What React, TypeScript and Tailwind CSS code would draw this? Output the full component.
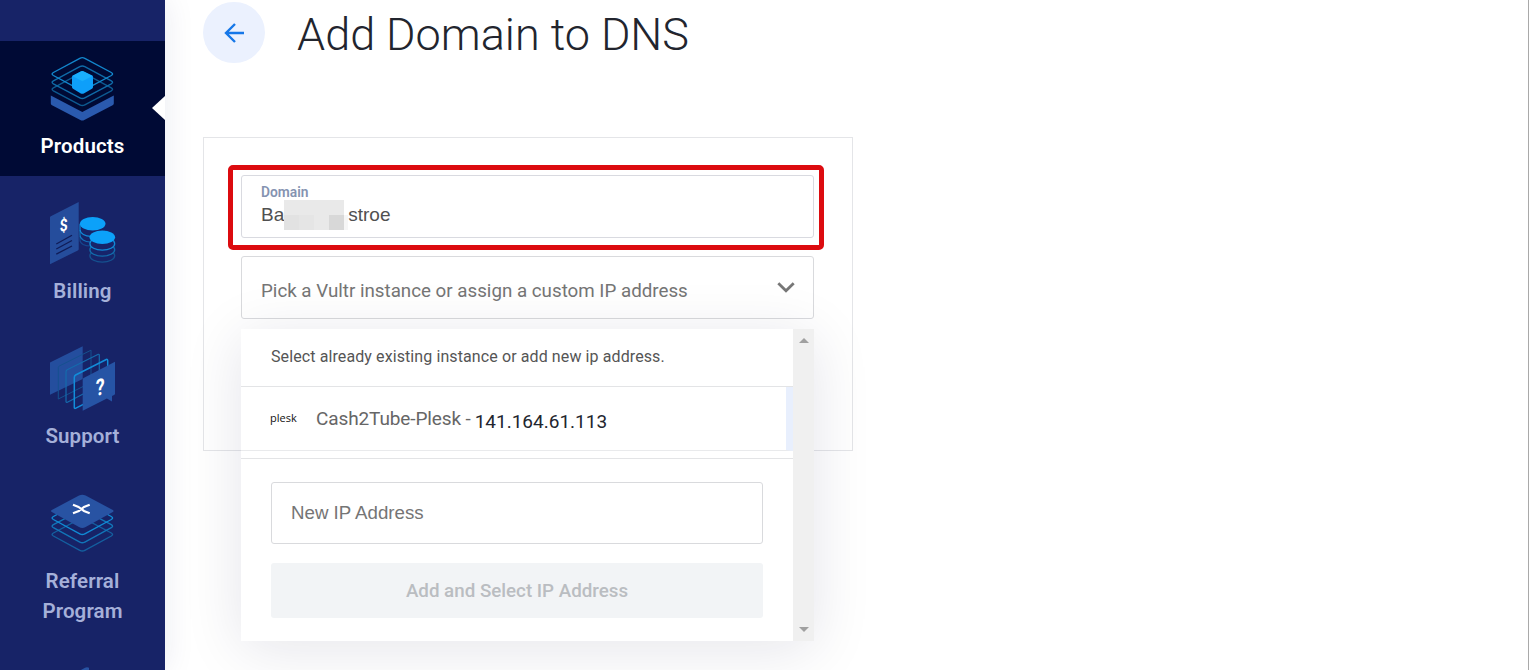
import { ReactNode } from 'react';

const roboto = "font-['Roboto',sans-serif]";

function ProductsIcon() {
  return (
    <svg width="66" height="66" viewBox="0 0 66 66" fill="none">
      <path d="M0.8 39.5 L32.3 56 L63.8 39.5 V47.5 Q63.8 48.5 62.6 49.2 L34.3 63.9 Q32.3 65 30.3 63.9 L2 49.2 Q0.8 48.5 0.8 47.5Z" fill="#2a5aae" />
      <g strokeWidth="1.4">
        <path d="M3.4 31.8 L29.8 17.6 Q32.3 16.3 34.8 17.6 L61.3 31.8 Q63.8 33.3 61.3 34.8 L34.8 48.9 Q32.3 50.2 29.8 48.9 L3.4 34.8 Q0.8 33.3 3.4 31.8Z" stroke="#0d5a90" />
        <path d="M3.4 24.8 L29.8 10.6 Q32.3 9.3 34.8 10.6 L61.3 24.8 Q63.8 26.3 61.3 27.8 L34.8 41.9 Q32.3 43.2 29.8 41.9 L3.4 27.8 Q0.8 26.3 3.4 24.8Z" stroke="#0f6ba8" />
        <path d="M3.4 16.5 L29.8 2.3 Q32.3 1 34.8 2.3 L61.3 16.5 Q63.8 18 61.3 19.5 L34.8 33.6 Q32.3 34.9 29.8 33.6 L3.4 19.5 Q0.8 18 3.4 16.5Z" stroke="#1287cd" />
      </g>
      <path d="M30.8 15.4 Q32.3 14.6 33.8 15.4 L42.2 19.6 Q43 20 43 21 V31 Q43 32.2 42 32.8 L33.8 37.4 Q32.3 38.2 30.8 37.4 L23 32.8 Q22 32.2 22 31 V21 Q22 20 22.8 19.6Z" fill="#0e9ffa" />
      <path d="M30.8 15.4 Q32.3 14.6 33.8 15.4 L42.6 20 L32.3 25.2 L22.4 20Z" fill="#1aaefc" />
    </svg>
  );
}

function BillingIcon() {
  return (
    <svg width="66" height="66" viewBox="0 0 66 66" fill="none">
      <path d="M0 16.5 Q0 15.6 0.8 15.2 L28.7 1 V48 Q28.7 49 27.8 49.5 L0 63.2Z" fill="#254d9c" />
      <path d="M6.3 43 L22 34.3 M6.3 48 L22 39.5 M6.3 53.2 L22 45" stroke="#101c57" strokeWidth="1.3" />
      <text x="0" y="0" transform="translate(9.8 31) skewY(-14)" fontFamily="Roboto" fontWeight="700" fontSize="17" textLength="8" lengthAdjust="spacingAndGlyphs" fill="#fff">$</text>
      <g stroke="#1189d6" strokeWidth="1.2">
        <path d="M30 22.7 V28.5 C30 37 51 38 55 30" />
        <path d="M30 29 V34 C30 38 35 41 40 41" opacity="0.75" />
        <path d="M30 35 V39 C30 43 35 45 40 45" opacity="0.35" />
      </g>
      <ellipse cx="42.7" cy="22.7" rx="12.8" ry="6.8" fill="#0ca1f9" />
      <g fill="#17246a" stroke="#1189d6" strokeWidth="1.3">
        <ellipse cx="52.3" cy="54.7" rx="12.4" ry="6.5" stroke="#15518f" />
        <ellipse cx="52.3" cy="48.7" rx="12.4" ry="6.5" stroke="#126dad" />
        <ellipse cx="52.3" cy="42.7" rx="12.4" ry="6.5" />
      </g>
      <ellipse cx="52.3" cy="36.3" rx="12.8" ry="6.8" fill="#0ca1f9" />
    </svg>
  );
}

function SupportIcon() {
  return (
    <svg width="66" height="66" viewBox="0 0 66 66" fill="none">
      <path d="M0 16.5 L32.7 0.3 V33 L0 48.7Z" fill="#244e9e" />
      <g strokeLinejoin="round">
        <path d="M8.3 21.5 Q8.3 20.5 9.3 20 L41 4.2 V36.5 L8.3 53Z" stroke="#15518f" strokeWidth="1" />
        <path d="M16 26 Q16 24.5 17.2 23.8 L48.3 8.3 Q49.3 8 49.3 9.2 V39.5 L17.4 56.2 Q16 56.8 16 55.5Z" stroke="#156bad" strokeWidth="1.2" />
        <path d="M24.3 31.5 Q24.3 29.8 25.6 29 L56.3 13.5 Q57.7 13 57.7 14.5 V46 L25.9 62.2 Q24.3 63 24.3 61.5Z" stroke="#128dda" strokeWidth="1.5" />
      </g>
      <path d="M32.7 33.5 Q32.7 32.5 33.6 32 L65 15.7 V47.5 Q65 48.5 64 49 L62 50 V55.5 L56.9 52.4 L32.7 64.7Z" fill="#2654a5" />
      <text x="0" y="0" transform="translate(45.8 50.3) skewY(-14)" fontFamily="Roboto" fontWeight="700" fontSize="23" textLength="9" lengthAdjust="spacingAndGlyphs" fill="#fff">?</text>
    </svg>
  );
}

function ReferralIcon() {
  return (
    <svg width="66" height="66" viewBox="0 0 66 66" fill="none">
      <g strokeWidth="1.4">
        <path d="M3.4 42 L29.8 28 L34.8 28 L61.3 42 Q63.8 43.5 61.3 45 L34.8 59.4 Q32.3 60.7 29.8 59.4 L3.4 45 Q0.8 43.5 3.4 42Z" stroke="#145f9f" />
        <path d="M3.4 33.7 L29.8 20 L34.8 20 L61.3 33.7 Q63.8 35.2 61.3 36.7 L34.8 51.1 Q32.3 52.4 29.8 51.1 L3.4 36.7 Q0.8 35.2 3.4 33.7Z" stroke="#1275b8" />
        <path d="M3.4 25.5 L29.8 11 L34.8 11 L61.3 25.5 Q63.8 27 61.3 28.5 L34.8 42.9 Q32.3 44.2 29.8 42.9 L3.4 28.5 Q0.8 27 3.4 25.5Z" stroke="#108bd5" />
      </g>
      <path d="M1.8 19 L29 4.5 Q32.3 2.8 35.6 4.5 L62.8 19 Q64.4 20 62.8 21 L35.6 36 Q32.3 37.8 29 36 L1.8 21 Q0.2 20 1.8 19Z" fill="#2853a3" />
      <path d="M23 13.8 L28.5 15.9 L34 20 L39.7 22.2 M39.7 13.8 L34 15.9 L28.8 20 L23 22.2" stroke="#fff" strokeWidth="2.2" />
    </svg>
  );
}

function AccountIcon() {
  return (
    <svg width="66" height="66" viewBox="0 0 66 66">
      <path d="M5 18 L35 1.8 Q37 0.8 39 1.8 L39 35 L5 52Z" fill="#2853a3" />
    </svg>
  );
}

interface NavItemProps {
  icon: ReactNode;
  label?: string;
  active?: boolean;
}

function NavItem({ icon, label, active }: NavItemProps) {
  return (
    <a
      className={`relative flex shrink-0 flex-col items-center px-7 py-[15px] text-center text-[20.5px] leading-[30px] font-semibold tracking-[0.12px] ${
        active ? 'bg-[#000a35] text-white' : 'text-[#a5b0d9]'
      }`}
    >
      {icon}
      {label && <span className="mt-[9px]">{label}</span>}
      {active && (
        <svg className="absolute top-[55px] right-0" width="13" height="24" viewBox="0 0 13 24">
          <path d="M13 0 V24 L0 12Z" fill="#fff" />
        </svg>
      )}
    </a>
  );
}

const navItems = [
  { id: 'products', label: 'Products', icon: <ProductsIcon />, active: true },
  { id: 'billing', label: 'Billing', icon: <BillingIcon /> },
  { id: 'support', label: 'Support', icon: <SupportIcon /> },
  { id: 'referral', label: 'Referral Program', icon: <ReferralIcon /> },
  { id: 'account', icon: <AccountIcon /> },
];

function InstanceDropdown() {
  return (
    <div className="absolute top-[72px] left-[-1px] flex h-[312px] w-[573px] shadow-[0_8px_56px_rgba(15,20,60,0.11)]">
      <div className="w-[552px] bg-white">
        <p className="h-[58px] border-b border-[#e3e4e6] pl-[30px] text-[16px] leading-[55px] tracking-[0.1px] text-[#555]">
          Select already existing instance or add new ip address.
        </p>
        <div className="flex h-16 items-center border-r-[7px] border-b border-r-[#e8effd] border-b-[#e9eaec] pl-[29px]">
          <span className="mb-[3px] w-[46px] font-['Open_Sans',sans-serif] text-[11px] leading-none text-[#111]">plesk</span>
          <span className="pt-px text-[19px] tracking-[-0.12px] text-[#666]">Cash2Tube-Plesk -</span>
          <span className="mt-[7px] ml-1 text-[19px] text-[#22252e]">141.164.61.113</span>
        </div>
        <div className="mt-[7px] border-t border-[#e3e4e6] px-[30px] pt-[23px]">
          <input
            className="block h-[62px] w-full rounded-[3px] border border-[#d9dadd] px-[19px] pb-px font-['Liberation_Sans',sans-serif] text-[18.7px] text-[#555] placeholder:text-[#757575]"
            placeholder="New IP Address"
          />
          <button className="mt-[19px] h-[55px] w-full rounded-[3px] bg-[#f2f4f6] pt-[2px] text-[18.75px] font-medium text-[#babdc1]">
            Add and Select IP Address
          </button>
        </div>
      </div>
      <div className="flex w-[21px] flex-col items-center justify-between bg-[#f0f0f0] pt-[9px] pb-[9px]">
        <svg width="10" height="5" viewBox="0 0 10 5">
          <path d="M0 5 L5 0 L10 5Z" fill="#a0a0a0" />
        </svg>
        <svg width="10" height="5" viewBox="0 0 10 5">
          <path d="M0 0 H10 L5 5Z" fill="#a0a0a0" />
        </svg>
      </div>
    </div>
  );
}

export default function App() {
  return (
    <div className={`flex h-[670px] w-full overflow-hidden border-r border-[#a9a9a9] bg-white ${roboto}`}>
      <nav className="flex w-[165px] shrink-0 flex-col gap-[10px] overflow-hidden bg-[#172367] pt-[41px] shadow-[0_0_30px_rgba(25,35,100,0.09)]">
        {navItems.map((item) => (
          <NavItem key={item.id} icon={item.icon} label={item.label} active={item.active} />
        ))}
      </nav>

      <main className="flex-1 pl-[38px]">
        <header className="flex h-[137px] items-start pt-[2px]">
          <button className="flex h-[61px] w-[62px] items-center justify-center rounded-full bg-[#ebf1fe]">
            <svg width="21" height="20" viewBox="0 0 21 20" fill="none" stroke="#1677e8" strokeWidth="2.4">
              <path d="M20 10 H2 M11 1 L2 10 L11 19" />
            </svg>
          </button>
          <h1 className="ml-[32px] pt-px text-[45px] leading-[64px] font-light text-[#22252e]">Add Domain to DNS</h1>
        </header>

        <section className="h-[314px] w-[650px] border border-[#e4e5e8] px-[37px] pt-[37px]">
          <div className="relative h-[63px] w-[573px] rounded-[3px] border border-[#d9dae0] pt-[7px] pl-[19px]">
            <label className="block text-[13.8px] leading-[18px] font-semibold text-[#8593b1]">Domain</label>
            <div className="flex h-7 items-center font-['Liberation_Sans',sans-serif] text-[19px] text-[#505050]">
              Ba
              <svg className="-mt-px" width="64" height="30" viewBox="0 0 64 30">
                <rect width="60" height="30" fill="#e9e9e9" />
                <rect x="60" y="15" width="4" height="15" fill="#f6f6f6" />
                <rect y="15" width="15" height="15" fill="#e2e2e2" />
                <rect x="15" y="15" width="15" height="15" fill="#e5e5e5" />
                <rect x="45" y="15" width="15" height="15" fill="#d8d8d8" />
              </svg>
              <span>stroe</span>
            </div>
            <div className="absolute -top-[11px] -left-[14px] h-[85px] w-[596px] rounded-[5px] border-5 border-[#dc0b0f]" />
          </div>

          <div className="relative mt-[18px] flex h-[63px] w-[573px] items-center justify-between rounded-[3px] border border-[#d9dadd] pr-[18px] pl-[19px]">
            <span className="pt-[7px] text-[18.75px] text-[#757575]">Pick a Vultr instance or assign a custom IP address</span>
            <svg width="18" height="11" viewBox="0 0 18 11" fill="none" stroke="#777" strokeWidth="2.8">
              <path d="M1.3 1.2 L9 8.8 L16.7 1.2" />
            </svg>
            <InstanceDropdown />
          </div>
        </section>
      </main>
    </div>
  );
}
